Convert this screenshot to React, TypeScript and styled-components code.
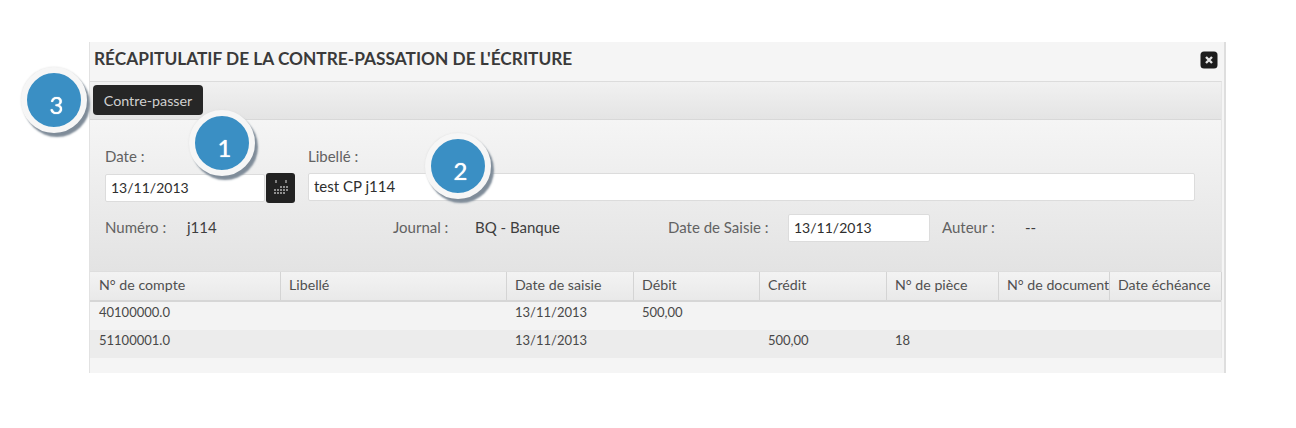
import styled, { createGlobalStyle } from 'styled-components';

const GlobalStyle = createGlobalStyle`
  html, body {
    margin: 0;
    padding: 0;
    background: #fff;
  }
  body {
    font-family: "Lato", "Open Sans", sans-serif;
    color: #4a4a4a;
  }
`;

const columns = '191px 226px 127px 126px 127px 112px 111px 112px';

const headers = ['N° de compte', 'Libellé', 'Date de saisie', 'Débit', 'Crédit', 'N° de pièce', 'N° de document', 'Date échéance'];

const rows = [
  ['40100000.0', '', '13/11/2013', '500,00', '', '', '', ''],
  ['51100001.0', '', '13/11/2013', '', '500,00', '18', '', ''],
];

const CloseIcon = () => (
  <svg width="18" height="18" viewBox="0 0 18 18">
    <rect x="0.5" y="0.5" width="17" height="17" rx="3.5" fill="#1d1d1d" />
    <path d="M6 6l6 6M12 6l-6 6" stroke="#e4e4e4" strokeWidth="2.4" />
  </svg>
);

const CalendarIcon = () => (
  <svg width="16" height="18" viewBox="0 0 16 18">
    <path d="M3 1v3M13 1v3" stroke="#8a8a8a" strokeWidth="1.8" />
    <path
      d="M7 7h2v2H7zM10 7h2v2h-2zM13 7h2v2h-2zM1 10h2v2H1zM4 10h2v2H4zM7 10h2v2H7zM10 10h2v2h-2zM13 10h2v2h-2zM1 13h2v2H1zM4 13h2v2H4zM7 13h2v2H7zM10 13h2v2h-2z"
      fill="#8f8f8f"
    />
  </svg>
);

export default function App() {
  return (
    <Page>
      <GlobalStyle />
      <Panel>
        <Header>
          <Title>RÉCAPITULATIF DE LA CONTRE-PASSATION DE L'ÉCRITURE</Title>
          <CloseButton>
            <CloseIcon />
          </CloseButton>
        </Header>
        <Inner>
          <Toolbar>
            <DarkButton>Contre-passer</DarkButton>
          </Toolbar>
          <Form>
            <FieldRow>
              <Field>
                <Label>Date :</Label>
                <DateWrap>
                  <Input defaultValue="13/11/2013" $width="160px" />
                  <CalendarButton>
                    <CalendarIcon />
                  </CalendarButton>
                </DateWrap>
              </Field>
              <Field>
                <Label>Libellé :</Label>
                <Input defaultValue="test CP j114" $width="887px" $size="15px" />
              </Field>
            </FieldRow>
            <InfoRow>
              <InfoLabel $width="82px">Numéro :</InfoLabel>
              <InfoValue $width="206px">j114</InfoValue>
              <InfoLabel $width="82px">Journal :</InfoLabel>
              <InfoValue $width="193px">BQ - Banque</InfoValue>
              <InfoLabel $width="120px">Date de Saisie :</InfoLabel>
              <Input defaultValue="13/11/2013" $width="142px" />
              <InfoLabel $width="95px" $indent="12px">Auteur :</InfoLabel>
              <InfoValue $width="30px">--</InfoValue>
            </InfoRow>
          </Form>
          <HeaderRow>
            {headers.map((h) => (
              <HeaderCell key={h}>{h}</HeaderCell>
            ))}
          </HeaderRow>
          {rows.map((row, i) => (
            <Row key={row[0]} $alt={i === 1}>
              {row.map((cell, j) => (
                <Cell key={j}>{cell}</Cell>
              ))}
            </Row>
          ))}
        </Inner>
        <Badge $left="-69px" $top="25px">3</Badge>
        <Badge $left="99px" $top="68px">1</Badge>
        <Badge $left="335px" $top="91px">2</Badge>
      </Panel>
    </Page>
  );
}

const Page = styled.div`
  width: 1296px;
  height: 428px;
  padding: 42px 0 0 89px;
  box-sizing: border-box;
  overflow: hidden;
  filter: blur(0.45px);
`;

const Panel = styled.div`
  position: relative;
  width: 1137px;
  height: 331px;
  background: #f5f5f5;
  border-right: 2px solid #dedede;
  border-left: 1px solid #e2e2e2;
  box-sizing: border-box;
`;

const Header = styled.div`
  height: 39px;
  display: flex;
  align-items: center;
  justify-content: space-between;
  padding: 0 6px 7px 4px;
  box-sizing: border-box;
`;

const Title = styled.div`
  font-size: 17.3px;
  font-weight: 700;
  color: #3a3a3a;
  white-space: nowrap;
`;

const CloseButton = styled.div`
  display: flex;
  margin-top: 4px;
`;

const Inner = styled.div`
  width: 1132px;
  border-top: 1px solid #dcdcdc;
  border-right: 1px solid #e6e6e6;
  box-sizing: border-box;
`;

const Toolbar = styled.div`
  height: 38px;
  padding: 3px 0 0 3px;
  box-sizing: border-box;
  background: linear-gradient(#f1f1f1, #e4e4e4);
  border-bottom: 1px solid #d8d8d8;
`;

const DarkButton = styled.div`
  display: inline-flex;
  align-items: center;
  justify-content: center;
  width: 110px;
  height: 30px;
  border-radius: 4px;
  background: #262626;
  color: #d0d0d0;
  font-size: 14.3px;
`;

const Form = styled.div`
  height: 151px;
  padding: 28px 0 0 15px;
  box-sizing: border-box;
  background: linear-gradient(#f5f5f5, #e3e3e3);
`;

const FieldRow = styled.div`
  display: flex;
  gap: 13px;
`;

const Field = styled.div`
  display: flex;
  flex-direction: column;
  gap: 8px;
`;

const Label = styled.div`
  font-size: 15px;
  line-height: 17px;
  color: #626262;
`;

const DateWrap = styled.div`
  display: flex;
  align-items: center;
  gap: 1px;
`;

const Input = styled.input<{ $width: string; $size?: string }>`
  width: ${(p) => p.$width};
  height: 28px;
  padding: 0 5px 2px;
  box-sizing: border-box;
  border: 1px solid #dcdcdc;
  border-radius: 2px;
  background: #fff;
  font-family: inherit;
  font-size: ${(p) => p.$size || '14px'};
  color: #2e2e2e;
  outline: none;
`;

const CalendarButton = styled.div`
  width: 29px;
  height: 30px;
  display: flex;
  align-items: center;
  justify-content: center;
  border-radius: 3px;
  background: #222;
`;

const InfoRow = styled.div`
  display: flex;
  align-items: center;
  margin-top: 11px;
  height: 28px;
`;

const InfoLabel = styled.div<{ $width: string; $indent?: string }>`
  width: ${(p) => p.$width};
  padding-left: ${(p) => p.$indent || 0};
  padding-bottom: 2px;
  box-sizing: border-box;
  font-size: 15px;
  color: #626262;
  white-space: nowrap;
`;

const InfoValue = styled.div<{ $width: string }>`
  width: ${(p) => p.$width};
  padding-bottom: 2px;
  font-size: 15px;
  color: #3e3e3e;
`;

const HeaderRow = styled.div`
  display: grid;
  grid-template-columns: ${columns};
  height: 28px;
  background: linear-gradient(#f3f3f3, #e9e9e9);
  border-top: 1px solid #dedede;
  border-bottom: 2px solid #d6d6d6;
`;

const HeaderCell = styled.div`
  display: flex;
  align-items: center;
  padding: 0 0 3px 8px;
  border-right: 1px solid #d4d4d4;
  font-size: 14.2px;
  color: #505050;
  white-space: nowrap;
  overflow: hidden;
  &:first-child {
    padding-left: 9px;
  }
`;

const Row = styled.div<{ $alt: boolean }>`
  display: grid;
  grid-template-columns: ${columns};
  height: 28px;
  background: ${(p) => (p.$alt ? '#ececec' : '#f3f3f3')};
`;

const Cell = styled.div`
  padding: 2px 0 0 8px;
  font-size: 13px;
  line-height: 16px;
  color: #484848;
  &:first-child {
    padding-left: 9px;
  }
`;

const Badge = styled.div<{ $left: string; $top: string }>`
  position: absolute;
  left: ${(p) => p.$left};
  top: ${(p) => p.$top};
  width: 66px;
  height: 66px;
  display: flex;
  align-items: center;
  justify-content: center;
  padding: 8px 0 0 5px;
  box-sizing: border-box;
  border-radius: 50%;
  background: #3a8fc4;
  border: 6px solid #f6f6f6;
  box-shadow: 3px 4px 2px #7f8c99, 0 0 2px #ddd;
  color: #fff;
  font-size: 24px;
  text-shadow: 0 0 1px #fff;
`;
